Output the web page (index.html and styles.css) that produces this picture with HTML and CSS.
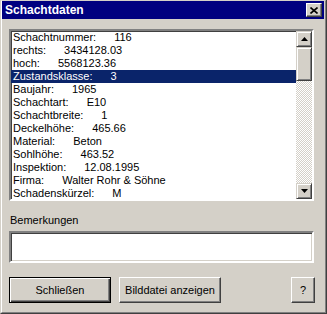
FILE: index.html
```html
<!DOCTYPE html>
<html lang="de">
<head>
    <meta charset="UTF-8">
    <title>Schachtdaten</title>
    <link rel="stylesheet" href="styles.css">
</head>
<body>
    <div class="window">
        <div class="frame">
            <div class="titlebar">
                <span class="title">Schachtdaten</span>
                <button class="close-btn">
                    <svg width="8" height="7" viewBox="0 0 8 7"><path d="M0.5 0.5 L7.5 6.5 M7.5 0.5 L0.5 6.5" stroke="#000" stroke-width="1.6"/></svg>
                </button>
            </div>

            <div class="content">
                <div class="listbox">
                    <ul class="items">
                        <li><span class="lbl">Schachtnummer:</span><span class="val">116</span></li>
                        <li><span class="lbl">rechts:</span><span class="val">3434128.03</span></li>
                        <li><span class="lbl">hoch:</span><span class="val">5568123.36</span></li>
                        <li class="selected"><span class="lbl">Zustandsklasse:</span><span class="val">3</span></li>
                        <li><span class="lbl">Baujahr:</span><span class="val">1965</span></li>
                        <li><span class="lbl">Schachtart:</span><span class="val">E10</span></li>
                        <li><span class="lbl">Schachtbreite:</span><span class="val">1</span></li>
                        <li><span class="lbl">Deckelhöhe:</span><span class="val">465.66</span></li>
                        <li><span class="lbl">Material:</span><span class="val">Beton</span></li>
                        <li><span class="lbl">Sohlhöhe:</span><span class="val">463.52</span></li>
                        <li><span class="lbl">Inspektion:</span><span class="val">12.08.1995</span></li>
                        <li><span class="lbl">Firma:</span><span class="val">Walter Rohr &amp; Söhne</span></li>
                        <li><span class="lbl">Schadenskürzel:</span><span class="val">M</span></li>
                    </ul>
                    <div class="scrollbar">
                        <div class="sb-btn">
                            <svg width="7" height="4" viewBox="0 0 7 4"><path d="M3.5 0 L7 4 L0 4 Z" fill="#000"/></svg>
                        </div>
                        <div class="sb-thumb"></div>
                        <div class="sb-track"></div>
                        <div class="sb-btn">
                            <svg width="7" height="4" viewBox="0 0 7 4"><path d="M0 0 L7 0 L3.5 4 Z" fill="#000"/></svg>
                        </div>
                    </div>
                </div>

                <div class="remarks-label">Bemerkungen</div>
                <div class="textbox"></div>

                <div class="buttons">
                    <button class="btn btn-default">Schließen</button>
                    <button class="btn">Bilddatei anzeigen</button>
                    <button class="btn btn-help">?</button>
                </div>
            </div>
        </div>
    </div>
</body>
</html>
```

FILE: styles.css
```css
body {
    margin: 0;
    font-family: "Liberation Sans", Arial, sans-serif;
    font-size: 11px;
    background-color: #d4d0c8;
}
.window {
    width: 327px;
    height: 314px;
    box-sizing: border-box;
    border: 1px solid;
    border-color: #d4d0c8 #404040 #404040 #d4d0c8;
    border-top: none;
    background-color: #d4d0c8;
}
.frame {
    height: 100%;
    box-sizing: border-box;
    border: 1px solid;
    border-color: #d4d0c8 #808080 #808080 #fff;
    padding-right: 1px;
}
.titlebar {
    height: 18px;
    background-color: #000080;
    display: flex;
    align-items: center;
    justify-content: space-between;
    padding: 0 2px 0 3px;
}
.title {
    color: #fff;
    font-weight: bold;
    font-size: 12px;
}
.close-btn {
    width: 16px;
    height: 14px;
    padding: 0;
    box-sizing: border-box;
    background-color: #d4d0c8;
    border: 1px solid;
    border-color: #fff #404040 #404040 #fff;
    box-shadow: inset -1px -1px #808080;
    display: flex;
    align-items: center;
    justify-content: center;
}
.content {
    padding: 10px 10px 0 7px;
}
.listbox {
    height: 172px;
    box-sizing: border-box;
    border: 2px solid;
    border-color: #808080 #fff #fff #808080;
    box-shadow: inset 1px 1px #404040;
    background-color: #fff;
    display: flex;
    overflow: hidden;
}
.items {
    flex: 1;
    list-style: none;
    margin: 0;
    padding: 0 0 0 0;
    overflow: hidden;
}
.items li {
    height: 13px;
    line-height: 13px;
    padding-left: 2px;
    white-space: nowrap;
    color: #000;
    display: flex;
    gap: 18px;
}
.items li.selected {
    background-color: #0a246a;
    color: #fff;
}
.scrollbar {
    width: 16px;
    display: flex;
    flex-direction: column;
}
.sb-btn, .sb-thumb {
    height: 16px;
    box-sizing: border-box;
    background-color: #d4d0c8;
    border: 1px solid;
    border-color: #d4d0c8 #404040 #404040 #d4d0c8;
    box-shadow: inset 1px 1px #fff, inset -1px -1px #808080;
    display: flex;
    align-items: center;
    justify-content: center;
}
.sb-thumb {
    height: 34px;
}
.sb-track {
    flex: 1;
    background: repeating-conic-gradient(#fff 0 25%, #d4d0c8 0 50%) 0 0 / 2px 2px;
}
.remarks-label {
    margin-top: 13px;
    height: 13px;
    line-height: 13px;
    padding-left: 1px;
}
.textbox {
    margin-top: 4px;
    height: 32px;
    box-sizing: border-box;
    border: 2px solid;
    border-color: #808080 #fff #fff #808080;
    box-shadow: inset 1px 1px #404040, inset -1px -1px #d4d0c8;
    background-color: #fff;
}
.buttons {
    margin-top: 14px;
    display: flex;
    gap: 8px;
}
.btn {
    width: 102px;
    height: 26px;
    padding: 0;
    box-sizing: border-box;
    font-family: "Liberation Sans", Arial, sans-serif;
    font-size: 11px;
    color: #000;
    background-color: #d4d0c8;
    border: 1px solid;
    border-color: #fff #404040 #404040 #fff;
    box-shadow: inset -1px -1px #808080;
}
.btn-default {
    border: 1px solid #000;
    box-shadow: inset 1px 1px #fff, inset -1px -1px #404040, inset -2px -2px #808080;
}
.btn-help {
    width: 24px;
    margin-left: auto;
    margin-right: -1px;
}
```
